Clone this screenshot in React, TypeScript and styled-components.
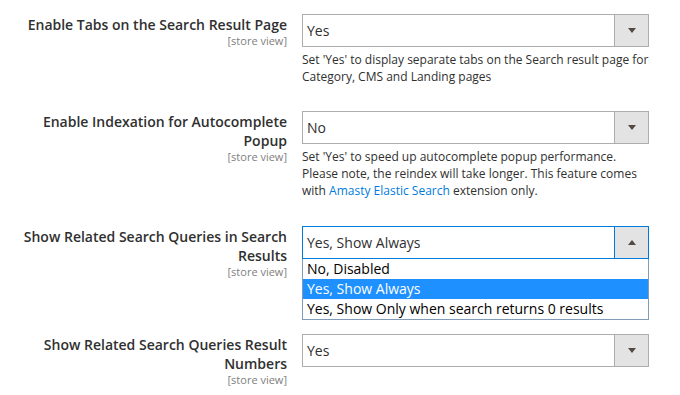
import React from "react";
import styled, { createGlobalStyle } from "styled-components";

const GlobalStyle = createGlobalStyle`
  body {
    margin: 0;
    background: #ffffff;
    font-family: "Open Sans", "Liberation Sans", sans-serif;
    color: #303030;
  }
`;

const Form = styled.div`
  padding: 14px 0 0 17px;
`;

const Row = styled.div<{ $spacing?: number }>`
  display: grid;
  grid-template-columns: 270px 347px;
  column-gap: 15px;
  align-items: start;
  margin-bottom: ${(p) => p.$spacing ?? 28}px;
`;

const Label = styled.div`
  text-align: right;
  padding-top: 1px;
`;

const LabelText = styled.div`
  font-size: 14px;
  font-weight: 600;
  line-height: 19px;
  color: #303030;
`;

const Scope = styled.div`
  font-size: 11px;
  line-height: 14px;
  color: #808080;
`;

const Control = styled.div`
  display: flex;
  flex-direction: column;
`;

const Select = styled.div<{ $open?: boolean }>`
  display: flex;
  height: 33px;
  box-sizing: border-box;
  border: 1px solid ${(p) => (p.$open ? "#007bdb" : "#adadad")};
  background: #ffffff;
`;

const Value = styled.div`
  flex: 1;
  padding-left: 4px;
  font-size: 14px;
  line-height: 31px;
  color: #303030;
`;

const ArrowBox = styled.div<{ $open?: boolean }>`
  width: 33px;
  background: #e3e3e3;
  border-left: 1px solid ${(p) => (p.$open ? "#007bdb" : "#adadad")};
  display: flex;
  align-items: center;
  justify-content: center;
`;

const Arrow = styled.span<{ $up?: boolean }>`
  width: 0;
  height: 0;
  border-left: 4px solid transparent;
  border-right: 4px solid transparent;
  ${(p) =>
    p.$up ? "border-bottom: 5px solid #514943;" : "border-top: 5px solid #514943;"}
`;

const Note = styled.div`
  margin-top: 4px;
  font-size: 12px;
  line-height: 17px;
  color: #303030;
`;

const Link = styled.a`
  color: #007bdb;
  text-decoration: none;
`;

const List = styled.ul`
  list-style: none;
  margin: 0;
  padding: 0;
  border: 1px solid #7f9db9;
  border-top: 0;
  background: #ffffff;
`;

const Option = styled.li<{ $active?: boolean }>`
  height: 20px;
  line-height: 20px;
  padding-left: 4px;
  font-size: 14px;
  background: ${(p) => (p.$active ? "#1e90ff" : "#ffffff")};
  color: ${(p) => (p.$active ? "#ffffff" : "#000000")};
`;

const Dropdown = ({ value, open }: { value: string; open?: boolean }) => (
  <Select $open={open}>
    <Value>{value}</Value>
    <ArrowBox $open={open}>
      <Arrow $up={open} />
    </ArrowBox>
  </Select>
);

const FieldLabel = ({ text }: { text: string }) => (
  <Label>
    <LabelText>{text}</LabelText>
    <Scope>[store view]</Scope>
  </Label>
);

export default function App() {
  return (
    <>
      <GlobalStyle />
      <Form>
        <Row $spacing={26}>
          <FieldLabel text="Enable Tabs on the Search Result Page" />
          <Control>
            <Dropdown value="Yes" />
            <Note>
              Set 'Yes' to display separate tabs on the Search result page for
              Category, CMS and Landing pages
            </Note>
          </Control>
        </Row>
        <Row $spacing={27}>
          <FieldLabel text="Enable Indexation for Autocomplete Popup" />
          <Control>
            <Dropdown value="No" />
            <Note>
              Set 'Yes' to speed up autocomplete popup performance. Please
              note, the reindex will take longer. This feature comes with{" "}
              <Link href="#">Amasty Elastic Search</Link> extension only.
            </Note>
          </Control>
        </Row>
        <Row $spacing={14}>
          <FieldLabel text="Show Related Search Queries in Search Results" />
          <Control>
            <Dropdown value="Yes, Show Always" open />
            <List>
              <Option>No, Disabled</Option>
              <Option $active>Yes, Show Always</Option>
              <Option>Yes, Show Only when search returns 0 results</Option>
            </List>
          </Control>
        </Row>
        <Row $spacing={0}>
          <FieldLabel text="Show Related Search Queries Result Numbers" />
          <Control>
            <Dropdown value="Yes" />
          </Control>
        </Row>
      </Form>
    </>
  );
}
